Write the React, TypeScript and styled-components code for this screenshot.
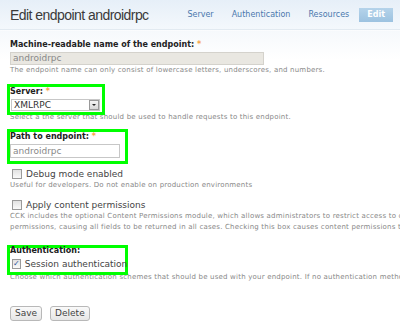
import React from "react";
import styled, { createGlobalStyle } from "styled-components";

const Global = createGlobalStyle`
  html, body { margin: 0; padding: 0; overflow: hidden; background: #fff; }
  body { width: 400px; height: 330px; font-family: "DejaVu Sans", Verdana, sans-serif; }
`;

const Page = styled.div`
  width: 400px;
  height: 330px;
  overflow: hidden;
  background: linear-gradient(#ffffff 0px, #ffffff 30px, #f6f9fc 31px, #ffffff 60px);
`;

const Header = styled.div`
  height: 29px;
  display: flex;
  align-items: center;
  justify-content: space-between;
  padding: 0 7px 0 10px;
  background: linear-gradient(#e6eff8, #f4f8fc);
  border-bottom: 1px solid #e2eaf1;
`;

const Title = styled.h1`
  margin: 0;
  font-family: "Liberation Sans", Arial, sans-serif;
  font-weight: normal;
  font-size: 14px;
  letter-spacing: -0.55px;
  color: #3a3a3a;
  white-space: nowrap;
`;

const Tabs = styled.nav`
  display: flex;
  align-items: center;
  gap: 2px;
`;

const Tab = styled.span<{ $active?: boolean }>`
  font-size: 8px;
  padding: 3px 8px;
  white-space: nowrap;
  color: ${(p) => (p.$active ? "#fff" : "#4a78ad")};
  font-weight: ${(p) => (p.$active ? "bold" : "normal")};
  background: ${(p) => (p.$active ? "linear-gradient(#b5d3ea, #9cc2e0)" : "transparent")};
  line-height: 8px;
`;

const Content = styled.div`
  width: 600px;
  padding: 10px 0 0 10px;
`;

const Label = styled.div<{ $mt?: number }>`
  font-size: 8px;
  font-weight: bold;
  color: #222;
  line-height: 10px;
  white-space: nowrap;
  margin-top: ${(p) => p.$mt ?? 0}px;
`;

const Star = styled.span`
  color: #f7a54a;
  font-weight: bold;
`;

const TextInput = styled.div<{ $w: number; $h: number; $disabled?: boolean }>`
  width: ${(p) => p.$w}px;
  height: ${(p) => p.$h}px;
  box-sizing: border-box;
  border: 1px solid ${(p) => (p.$disabled ? "#d4d2cc" : "#c7c7c7")};
  background: ${(p) => (p.$disabled ? "#e9e7e1" : "#fff")};
  color: #888;
  font-size: 9px;
  line-height: ${(p) => p.$h - 2}px;
  padding-left: 2px;
  margin-top: 2px;
`;

const Desc = styled.div<{ $mt?: number }>`
  font-size: 7px;
  color: #888;
  line-height: 11px;
  margin-top: ${(p) => p.$mt ?? 0}px;
  letter-spacing: 0.2px;
  white-space: nowrap;
`;

const Highlight = styled.div<{ $w: number; $mt: number; $pb: number }>`
  position: relative;
  z-index: 1;
  width: ${(p) => p.$w}px;
  box-sizing: border-box;
  margin-left: -3px;
  margin-top: ${(p) => p.$mt}px;
  border: 3px solid #00ff00;
  padding: 0 0 ${(p) => p.$pb}px 0;
`;

const Select = styled.div`
  width: 89px;
  height: 12px;
  box-sizing: border-box;
  border: 1px solid #c7c7c7;
  background: #fff;
  display: flex;
  align-items: center;
  justify-content: space-between;
  margin-top: 2px;
  margin-left: 1px;
  font-size: 9px;
  color: #333;
  padding-left: 2px;
`;

const DropBtn = styled.span`
  width: 10px;
  height: 10px;
  box-sizing: border-box;
  border: 1px solid #999;
  background: linear-gradient(#f4f4f4, #d8d8d8);
  display: flex;
  align-items: center;
  justify-content: center;
  &::after {
    content: "";
    border-left: 2px solid transparent;
    border-right: 2px solid transparent;
    border-top: 2px solid #222;
  }
`;

const CheckRow = styled.label<{ $mt?: number }>`
  display: flex;
  align-items: center;
  gap: 4px;
  margin-top: ${(p) => p.$mt ?? 0}px;
  margin-left: 2px;
  font-size: 9px;
  color: #444;
  line-height: 12px;
  white-space: nowrap;
`;

const Box = styled.span`
  width: 10px;
  height: 10px;
  box-sizing: border-box;
  border: 1px solid #9a9a9a;
  background: linear-gradient(#e2e2e2, #fafafa);
  display: flex;
  align-items: center;
  justify-content: center;
  color: #2a4f9a;
  font-size: 8px;
  line-height: 8px;
`;

const Buttons = styled.div`
  display: flex;
  gap: 8px;
  margin-top: 23px;
`;

const Button = styled.span`
  font-size: 9px;
  color: #444;
  padding: 1px 4px;
  line-height: 11px;
  border: 1px solid #b8b8b8;
  border-radius: 3px;
  background: linear-gradient(#fafafa, #e6e6e6);
`;

export default function App() {
  return (
    <Page>
      <Global />
      <Header>
        <Title>Edit endpoint androidrpc</Title>
        <Tabs>
          <Tab>Server</Tab>
          <Tab>Authentication</Tab>
          <Tab>Resources</Tab>
          <Tab $active>Edit</Tab>
        </Tabs>
      </Header>
      <Content>
        <Label>
          Machine-readable name of the endpoint: <Star>*</Star>
        </Label>
        <TextInput $w={254} $h={13} $disabled>androidrpc</TextInput>
        <Desc>The endpoint name can only consist of lowercase letters, underscores, and numbers.</Desc>

        <Highlight $w={98} $mt={8} $pb={1}>
          <Label>
            Server: <Star>*</Star>
          </Label>
          <Select>
            XMLRPC
            <DropBtn />
          </Select>
        </Highlight>
        <Desc $mt={-3}>Select a the server that should be used to handle requests to this endpoint.</Desc>

        <Highlight $w={121} $mt={6} $pb={3}>
          <Label>
            Path to endpoint: <Star>*</Star>
          </Label>
          <TextInput $w={110} $h={14}>androidrpc</TextInput>
        </Highlight>

        <CheckRow $mt={4}>
          <Box />
          Debug mode enabled
        </CheckRow>
        <Desc>Useful for developers. Do not enable on production environments</Desc>

        <CheckRow $mt={8}>
          <Box />
          Apply content permissions
        </CheckRow>
        <Desc>
          CCK includes the optional Content Permissions module, which allows administrators to restrict access to content fields based on
          <br />
          permissions, causing all fields to be returned in all cases. Checking this box causes content permissions to be applied to each field.
        </Desc>

        <Highlight $w={121} $mt={12} $pb={2}>
          <Label $mt={-2}>Authentication:</Label>
          <CheckRow $mt={2}>
            <Box>✓</Box>
            Session authentication
          </CheckRow>
        </Highlight>
        <Desc $mt={-3}>
          Choose which authentication schemes that should be used with your endpoint. If no authentication method is selected all requests will be done by an anonymous user.
        </Desc>

        <Buttons>
          <Button>Save</Button>
          <Button>Delete</Button>
        </Buttons>
      </Content>
    </Page>
  );
}
